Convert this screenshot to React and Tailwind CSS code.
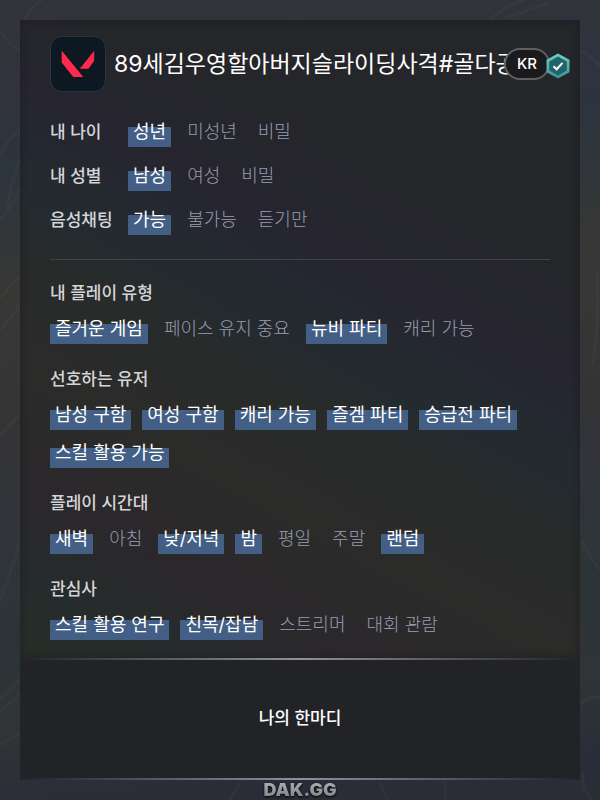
import React from "react";
import clsx from "clsx";

const basics = [
  { label: "내 나이", options: ["성년", "미성년", "비밀"], picked: ["성년"] },
  { label: "내 성별", options: ["남성", "여성", "비밀"], picked: ["남성"] },
  { label: "음성채팅", options: ["가능", "불가능", "듣기만"], picked: ["가능"] },
];

const sections = [
  {
    title: "내 플레이 유형",
    options: ["즐거운 게임", "페이스 유지 중요", "뉴비 파티", "캐리 가능"],
    picked: ["즐거운 게임", "뉴비 파티"],
  },
  {
    title: "선호하는 유저",
    options: ["남성 구함", "여성 구함", "캐리 가능", "즐겜 파티", "승급전 파티", "스킬 활용 가능"],
    picked: ["남성 구함", "여성 구함", "캐리 가능", "즐겜 파티", "승급전 파티", "스킬 활용 가능"],
  },
  {
    title: "플레이 시간대",
    options: ["새벽", "아침", "낮/저녁", "밤", "평일", "주말", "랜덤"],
    picked: ["새벽", "낮/저녁", "밤", "랜덤"],
  },
  {
    title: "관심사",
    options: ["스킬 활용 연구", "친목/잡담", "스트리머", "대회 관람"],
    picked: ["스킬 활용 연구", "친목/잡담"],
  },
];

const ValorantIcon = () => (
  <div className="h-14 w-14 shrink-0 overflow-hidden rounded-xl border border-[#2b3541] bg-[#0e1822]">
    <svg viewBox="1 1 54 54" className="h-full w-full" fill="#ff2a4d">
      <path d="M11.7 14.7 33.3 41H23.3L11.7 26.6Z" />
      <path d="M44.2 14.7V24.8L38.5 32.7H29.8Z" />
    </svg>
  </div>
);

const VerifiedBadge = () => (
  <svg viewBox="0 0 24 26" className="relative -ml-1 mt-1 h-[26px] w-6 shrink-0">
    <defs>
      <linearGradient id="badgeEdge" x1="0" y1="0" x2="0" y2="1">
        <stop offset="0" stopColor="#6fd0c8" />
        <stop offset="1" stopColor="#35958f" />
      </linearGradient>
    </defs>
    <path d="M12 .5 23.5 6.8V19.2L12 25.5.5 19.2V6.8Z" fill="url(#badgeEdge)" />
    <path d="M12 3.6 20.8 8.4V17.6L12 22.4 3.2 17.6V8.4Z" fill="#226469" />
    <path d="M7.5 13.2 10.7 16.2 16.5 9.8" fill="none" stroke="#fff" strokeWidth="2" />
  </svg>
);

// dim streaks behind the card
const Backdrop = () => (
  <svg
    viewBox="0 0 600 800"
    preserveAspectRatio="none"
    className="absolute inset-0 h-full w-full"
    fill="none"
    stroke="#7d8580"
    strokeOpacity="0.07"
    strokeWidth="3"
  >
    <path d="M25 20 Q30 8 42 0M0 30 Q8 45 20 50M0 155 Q10 135 20 132M8 210 Q10 180 20 160M0 220 Q14 206 20 186" />
    <path d="M0 298 20 276M0 330 20 306M0 436 20 414M0 600 Q12 570 20 540M0 700 20 680M0 712 20 694M0 745 20 733" />
    <path d="M490 20 Q505 5 525 0M505 18 Q530 10 550 2M580 50 Q590 55 600 66M597 270 Q600 330 592 366" />
    <path d="M582 540 Q588 556 600 570M580 705 Q590 694 600 698M584 772 Q580 785 592 800M445 780V800M380 782 388 800M240 782 230 800" />
  </svg>
);

const Tag = ({ active, children }) => (
  <li
    className={clsx(
      "h-[30px] px-[5px] text-[18px] leading-[30px] whitespace-nowrap",
      active
        ? "bg-[linear-gradient(to_bottom,transparent_10px,#445f85_10px)] text-white"
        : "font-light text-[#989db0]"
    )}
  >
    {children}
  </li>
);

const TagList = ({ options, picked }) => (
  <ul className="flex flex-wrap gap-x-[11px] gap-y-2">
    {options.map((option) => (
      <Tag key={option} active={picked.includes(option)}>
        {option}
      </Tag>
    ))}
  </ul>
);

const GlowLine = () => (
  <div className="h-0.5 bg-linear-to-r from-transparent via-[#929294] to-transparent" />
);

const App = () => {
  return (
    <div className="relative min-h-screen bg-[linear-gradient(175deg,#323338_0%,#30333d_12%,#2c343d_20%,#373836_34%,#343436_52%,#31343a_62%,#2c3437_76%,#303436_86%,#2a2d38_95%,#2b2d36_100%)] px-5 pt-5 font-['Inter','Noto_Sans_CJK_KR',sans-serif]">
      <Backdrop />

      <main className="relative bg-[#222327]">
        {/* Profile */}
        <div className="bg-[linear-gradient(208deg,#252629_0%,#25262a_28%,#262530_39%,#232b30_49%,#282b29_58%,#2b2b2a_69%,#2b282b_82%,#252c2b_92%,#262e29_100%)] shadow-[inset_0_0_10px_rgba(0,0,0,0.25)]">
          <header className="flex items-center pt-4 pr-[10px] pl-[30px]">
            <ValorantIcon />
            <h1 className="ml-2 min-w-0 flex-1 overflow-hidden text-[23px] leading-8 whitespace-nowrap text-white">
              89세김우영할아버지슬라이딩사격#골다공
            </h1>
            <span className="relative -ml-4 flex h-8 w-[46px] shrink-0 items-center justify-center rounded-full border-2 border-[#606062] bg-[#1b1b1d] text-[15px] font-medium text-white">
              KR
            </span>
            <VerifiedBadge />
          </header>

          <div className="px-[30px] pt-[25px] pb-[18px]">
            <div className="flex flex-col gap-[14px] border-b border-[#404347] pb-6">
              {basics.map((row) => (
                <div key={row.label} className="flex">
                  <h2 className="w-[78px] shrink-0 text-[17px] leading-[30px] font-medium text-[#d5d5d8]">
                    {row.label}
                  </h2>
                  <TagList options={row.options} picked={row.picked} />
                </div>
              ))}
            </div>

            <div className="flex flex-col gap-[23px] pt-[21px]">
              {sections.map((section) => (
                <section key={section.title}>
                  <h2 className="mb-[9px] text-[17px] leading-6 font-medium text-[#d5d5d8]">
                    {section.title}
                  </h2>
                  <TagList options={section.options} picked={section.picked} />
                </section>
              ))}
            </div>
          </div>
        </div>
        <GlowLine />

        {/* Comment */}
        <div className="flex h-[118px] items-center justify-center text-[17px] font-medium text-white">
          <p>나의 한마디</p>
        </div>
        <GlowLine />
      </main>

      <footer className="relative flex h-5 items-center justify-center">
        <span className="bg-linear-to-b from-[#b0b2b5] to-[#7d7f83] bg-clip-text text-[18px] leading-5 font-black text-transparent drop-shadow-[0_1px_1px_#000]">
          DAK.GG
        </span>
      </footer>
    </div>
  );
};

export default App;
